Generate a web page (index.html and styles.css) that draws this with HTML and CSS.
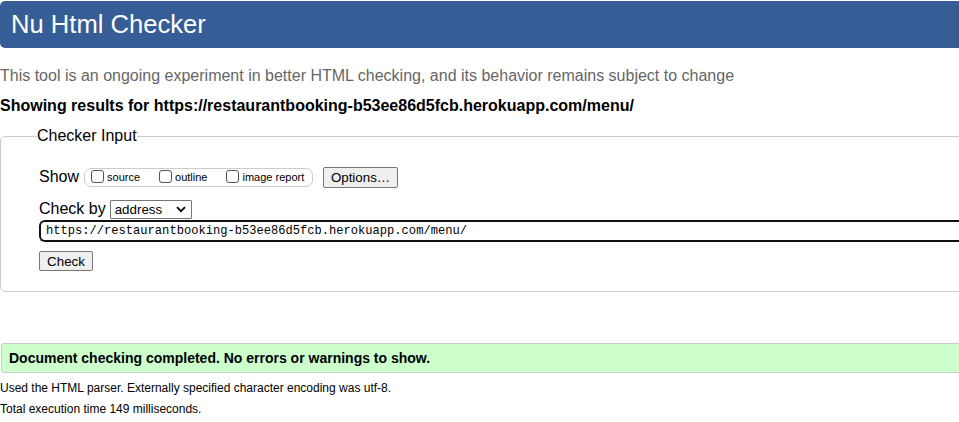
FILE: index.html
```html
<!DOCTYPE html>
<html>
<head>
<meta charset="utf-8">
<link rel="stylesheet" href="styles.css">
</head>
<body>
<div class="page">
  <h1 class="title">Nu Html Checker</h1>
  <p class="tagline">This tool is an ongoing experiment in better HTML checking, and its behavior remains subject to change</p>
  <p class="showing">Showing results for https://restaurantbooking-b53ee86d5fcb.herokuapp.com/menu/</p>
  <fieldset class="input-box">
    <legend>Checker Input</legend>
    <div class="row show-row">
      <span class="lbl">Show</span>
      <span class="opts">
        <label><span class="cb"></span>source</label>
        <label><span class="cb"></span>outline</label>
        <label><span class="cb"></span>image report</label>
      </span>
      <span class="btn opt-btn">Options…</span>
    </div>
    <div class="row by-row">
      <span class="lbl">Check by</span>
      <span class="select">address<svg width="10" height="7" viewBox="0 0 10 7"><path d="M1 1.2 L5 5.2 L9 1.2" fill="none" stroke="#000" stroke-width="1.8"/></svg></span>
    </div>
    <div class="url">https://restaurantbooking-b53ee86d5fcb.herokuapp.com/menu/</div>
    <span class="btn check-btn">Check</span>
  </fieldset>
  <p class="success">Document checking completed. No errors or warnings to show.</p>
  <p class="note">Used the HTML parser. Externally specified character encoding was utf-8.</p>
  <p class="note">Total execution time 149 milliseconds.</p>
</div>
</body>
</html>
```
FILE: styles.css
```css
html, body { margin: 0; padding: 0; overflow: hidden; background: #fff; }
body { font-family: "Liberation Sans", Arial, sans-serif; color: #000; }
.page { width: 1100px; }
.title {
  margin: 1px 0 0 0;
  height: 47px;
  line-height: 47px;
  padding-left: 11px;
  font-size: 25.6px;
  font-weight: normal;
  color: #fff;
  background: #365d95;
  border-radius: 5px 0 0 5px;
}
.tagline {
  margin: 19px 0 0 0;
  font-size: 16px;
  line-height: 18px;
  color: #666;
}
.showing {
  margin: 12px 0 0 0;
  font-size: 16px;
  line-height: 18px;
  font-weight: bold;
}
.input-box {
  margin: 12px 0 0 0;
  padding: 0 0 20px 38px;
  border: 1px solid #ccc;
  border-radius: 5px;
}
.input-box legend {
  font-size: 16px;
  line-height: 18px;
  padding: 0;
  margin-left: -2px;
}
.row { display: flex; align-items: center; }
.show-row { margin-top: 22px; height: 20px; }
.lbl { font-size: 16px; line-height: 18px; }
.opts {
  margin-left: 5px;
  height: 19px;
  box-sizing: border-box;
  border: 1px solid #ccc;
  border-radius: 7px;
  display: flex;
  align-items: center;
  padding: 0 6px 0 6px;
  width: 229px;
  font-size: 11px;
}
.opts label { display: flex; align-items: center; margin-right: 19px; }
.opts label:last-child { margin-right: 0; }
.cb {
  width: 13px; height: 13px;
  box-sizing: border-box;
  border: 1px solid #555;
  border-radius: 3px;
  margin-right: 3px;
  margin-top: -2px;
}
.btn {
  display: inline-flex;
  align-items: center;
  justify-content: center;
  box-sizing: border-box;
  border: 1px solid #767676;
  border-radius: 2px;
  background: #efefef;
  font-size: 13.33px;
}
.opt-btn { margin-left: 10px; width: 75px; height: 21px; }
.by-row { margin-top: 12px; height: 20px; }
.select {
  margin-left: 4px;
  width: 82px;
  height: 19px;
  box-sizing: border-box;
  border: 1px solid #767676;
  border-radius: 1px;
  font-size: 13.33px;
  display: flex;
  align-items: center;
  justify-content: space-between;
  padding: 0 5px 0 4px;
}
.url {
  margin-top: 1px;
  height: 22px;
  box-sizing: border-box;
  border: 2px solid #111;
  border-radius: 6px 0 0 6px;
  border-right: none;
  font-family: "Liberation Mono", "DejaVu Sans Mono", monospace;
  font-size: 12.1px;
  line-height: 18px;
  padding-left: 5px;
}
.check-btn { margin-top: 9px; width: 54px; height: 20px; }
.success {
  margin: 51px 0 0 1px;
  height: 30px;
  box-sizing: border-box;
  background: #ccffcc;
  border: 1px solid #ccc;
  border-radius: 3px;
  font-weight: bold;
  font-size: 14px;
  line-height: 28px;
  padding-left: 7px;
}
.note {
  margin: 8px 0 0 0;
  font-size: 12px;
  line-height: 14px;
}
.note + .note { margin-top: 7px; }
```
